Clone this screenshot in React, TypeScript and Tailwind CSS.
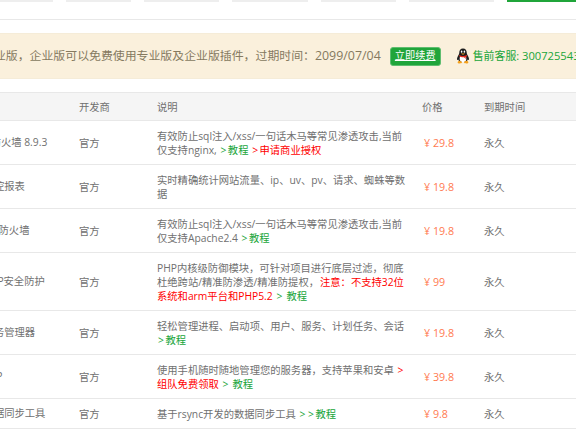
const font = { fontFamily: '"Open Sans", "Noto Sans CJK SC", sans-serif' };

const Gt = () => <span className="mr-[1.5px]">&gt;</span>;
const G = ({ children }: { children: React.ReactNode }) => <span className="text-[#20a53a] ml-[1px]">{children}</span>;
const R = ({ children }: { children: React.ReactNode }) => <span className="text-[#ff0000] ml-[1px]">{children}</span>;

const plugins = [
  {
    name: 'Nginx防火墙 8.9.3',
    desc: <>有效防止sql注入/xss/一句话木马等常见渗透攻击,当前仅支持nginx, <G><Gt />教程</G> <R><Gt />申请商业授权</R></>,
    price: '¥ 29.8',
  },
  { name: '网站监控报表', desc: <>实时精确统计网站流量、ip、uv、pv、请求、蜘蛛等数据</>, price: '¥ 19.8' },
  {
    name: 'Apache防火墙',
    desc: <>有效防止sql注入/xss/一句话木马等常见渗透攻击,当前仅支持Apache2.4 <G><Gt />教程</G></>,
    price: '¥ 19.8',
  },
  {
    name: '宝塔PHP安全防护',
    desc: <>PHP内核级防御模块，可针对项目进行底层过滤，彻底杜绝跨站/精准防渗透/精准防提权，<R>注意：不支持32位系统和arm平台和PHP5.2</R> <G><Gt /> 教程</G></>,
    price: '¥ 99',
  },
  { name: '宝塔任务管理器', desc: <>轻松管理进程、启动项、用户、服务、计划任务、会话 <G><Gt />教程</G></>, price: '¥ 19.8' },
  {
    name: '宝塔APP',
    desc: <>使用手机随时随地管理您的服务器，支持苹果和安卓 <R><Gt />组队免费领取</R> <G><Gt /> 教程</G></>,
    price: '¥ 39.8',
  },
  { name: '宝塔数据同步工具', desc: <>基于rsync开发的数据同步工具 <G>&gt; <Gt />教程</G></>, price: '¥ 9.8' },
];

const tabs = [
  { w: 'w-[53px]', bg: 'bg-[#eeeeee]' },
  { w: 'w-[65px]', bg: 'bg-[#eeeeee]' },
  { w: 'w-[75px]', bg: 'bg-[#eeeeee]' },
  { w: 'w-[76px]', bg: 'bg-[#eeeeee]' },
  { w: 'w-[75px]', bg: 'bg-[#eeeeee]' },
  { w: 'w-[85px]', bg: 'bg-[#eeeeee]' },
  { w: 'w-[69px]', bg: 'bg-[#20a53a]' },
];

function QQIcon() {
  return (
    <svg width="14" height="16" viewBox="0 0 14 16" className="shrink-0">
      <path d="M7 0.5C4.4 0.5 3.3 2.4 3.3 4.6c0 .8-.1 1.4-.6 2.2C1.9 8.1 1 9.7 1 11.2c0 1 .5 1.2 1.2.4.3 1 .9 1.8 1.6 2.4h6.4c.7-.6 1.3-1.4 1.6-2.4.7.8 1.2.6 1.2-.4 0-1.5-.9-3.1-1.7-4.4-.5-.8-.6-1.4-.6-2.2C10.7 2.4 9.6.5 7 .5z" fill="#1d1d1d" />
      <path d="M4.2 8.2C3.6 9.400 3.500 11 4 12.500c.6 1 1.800 1.500 3 1.500s2.400-.5 3-1.500c.5-1.500.4-3.100-.2-4.300z" fill="#ffffff" />
      <ellipse cx="5.600" cy="3.700" rx=".8" ry="1.100" fill="#ffffff" />
      <ellipse cx="8.400" cy="3.700" rx=".8" ry="1.100" fill="#ffffff" />
      <path d="M4.800 5.500h4.400L7 6.800z" fill="#f5a623" />
      <path d="M3.200 7c2.400 1.300 5.200 1.300 7.600 0l.3 1.300c-.6.300-1 .5-1.500.6l.2 2-1.800-1.700c-.7.1-1.300.1-2 0L3.400 8.400z" fill="#e8291c" />
      <path d="M2.200 13.200c-1 .8-.8 2 .8 2.200 1.200.1 2.700-.1 3-.9.100-.7-1.200-1.600-2.500-1.800zM11.800 13.200c1 .8.8 2-.8 2.200-1.200.1-2.700-.1-3-.9-.1-.7 1.200-1.600 2.500-1.800z" fill="#f5a11c" />
    </svg>
  );
}

export default function App() {
  return (
    <div className="w-[576px] h-[432px] overflow-hidden bg-white" style={font}>
      <div className="flex gap-[13px] h-[2px]">
        {tabs.map((t, i) => (
          <div key={i} className={`${t.w} ${t.bg} shrink-0 h-[2px]`} />
        ))}
      </div>

      <div className="mt-[17px] h-[1px] bg-[#e8e8e8]" />

      <div className="mt-[13px] h-[46px] bg-[#faf0dc] border-y border-[#f5ecd8] flex items-center whitespace-nowrap">
        <div className="-ml-[18px] flex items-center shrink-0">
          <span className="text-[11.9px] text-[#85795f]">企业版，企业版可以免费使用专业版及企业版插件，过期时间：<span className="text-[12.4px]">2099/07/04</span></span>
          <a className="ml-[9px] h-[19px] w-[51px] flex items-center justify-center rounded-[3px] border border-[#5fbd6f] bg-[#20a53a] text-white text-[10.2px] underline">立即续费</a>
          <span className="ml-[15px]"><QQIcon /></span>
          <span className="ml-[3px] text-[10.9px] text-[#20a53a]">售前客服: <span className="text-[11.2px]">3007255432</span></span>
        </div>
      </div>

      <div className="mt-[13px] -ml-[47px] w-[760px]">
        <table className="table-fixed w-full border-collapse text-[10.3px] leading-[14px] text-[#707070]">
          <colgroup>
            <col className="w-[126px]" />
            <col className="w-[78px]" />
            <col className="w-[265px]" />
            <col className="w-[62px]" />
            <col />
          </colgroup>
          <thead>
            <tr className="h-[28px] bg-[#f5f5f5] border-y border-[#e8e8e8]">
              <th className="font-normal text-left pl-[10px]">名称</th>
              <th className="font-normal text-left">开发商</th>
              <th className="font-normal text-left">说明</th>
              <th className="font-normal text-left">价格</th>
              <th className="font-normal text-left">到期时间</th>
            </tr>
          </thead>
          <tbody>
            {plugins.map((p) => (
              <tr key={p.name} className="border-b border-[#e8e8e8]">
                <td className="align-middle pb-[1px] pl-[10px]">{p.name}</td>
                <td className="align-middle pt-[1px]">官方</td>
                <td className="align-middle pt-[8px] pb-[7px] pr-[14px]">{p.desc}</td>
                <td className="align-middle text-[#ff7a50] pl-[2px] pt-[1px] text-[10.7px]">{p.price}</td>
                <td className="align-middle pt-[1px]">永久</td>
              </tr>
            ))}
          </tbody>
        </table>
      </div>
    </div>
  );
}
